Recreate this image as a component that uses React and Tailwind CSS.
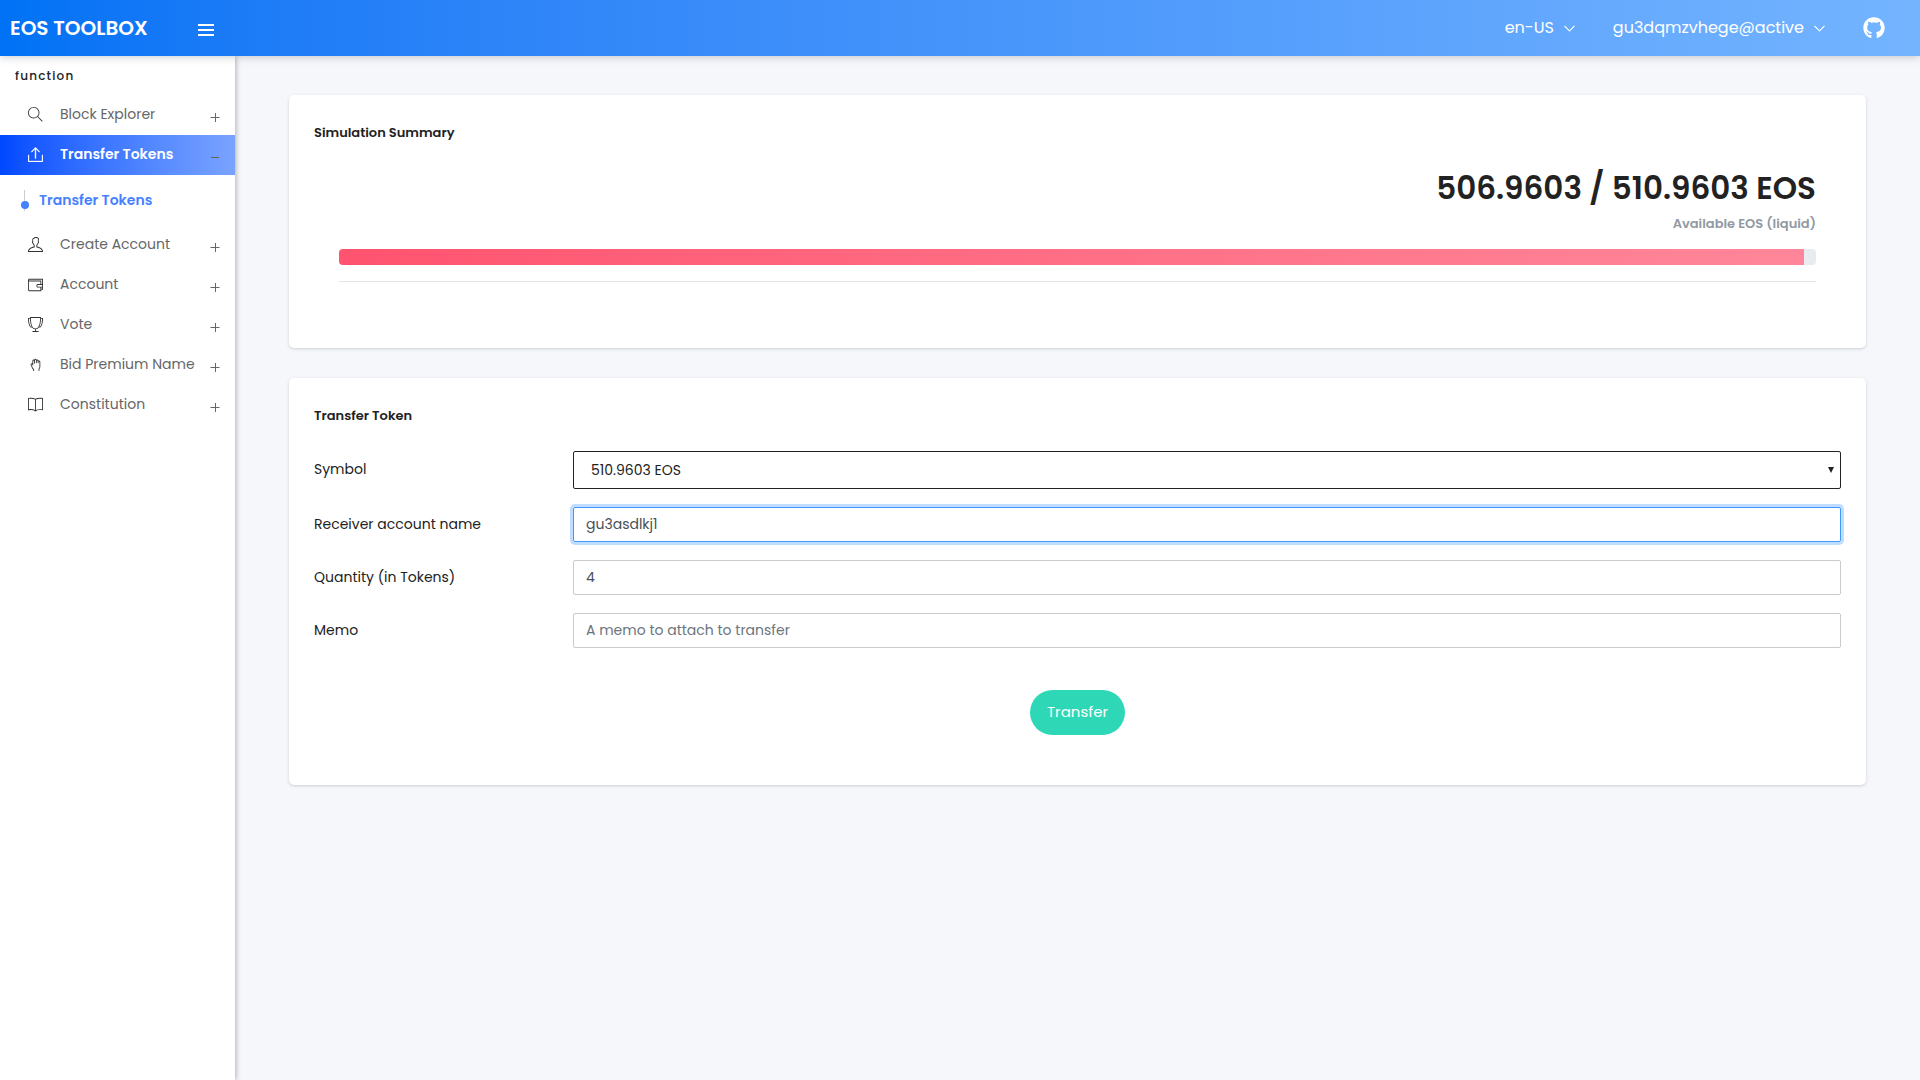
import { useState } from "react";
import { TfiAngleDown, TfiExport, TfiSearch, TfiUser, TfiWallet, TfiCup, TfiHandDrag, TfiBook } from "react-icons/tfi";
import { FaGithub } from "react-icons/fa";

const menu = [
    { title: "Block Explorer", icon: TfiSearch },
    { title: "Transfer Tokens", icon: TfiExport, active: true, children: ["Transfer Tokens"] },
    { title: "Create Account", icon: TfiUser },
    { title: "Account", icon: TfiWallet },
    { title: "Vote", icon: TfiCup },
    { title: "Bid Premium Name", icon: TfiHandDrag },
    { title: "Constitution", icon: TfiBook },
];

function Header() {
    return (
        <header className="relative z-20 flex h-14 items-center justify-between bg-linear-to-r from-[#0072f5] to-[#74b4ff] text-white shadow-[0_1px_8px_rgba(69,90,100,0.3)]">
            <div className="flex w-[235px] items-center justify-between pr-[21px] pl-[10px]">
                <a href="#" className="text-xl font-semibold">EOS TOOLBOX</a>
                <button type="button" aria-label="Toggle menu" className="pt-1">
                    <svg viewBox="0 0 16 14" className="h-3.5 w-4" fill="currentColor">
                        <path d="M0 1h16v2H0zM0 6h16v2H0zM0 11h16v2H0z" />
                    </svg>
                </button>
            </div>
            <nav className="flex items-center gap-[38px] pr-[35px] text-base">
                <button type="button" className="flex items-center gap-[10px]">
                    en-US
                    <TfiAngleDown className="size-[11px] stroke-1" />
                </button>
                <button type="button" className="flex items-center gap-[10px]">
                    gu3dqmzvhege@active
                    <TfiAngleDown className="size-[11px] stroke-1" />
                </button>
                <a href="#" aria-label="GitHub">
                    <FaGithub className="size-[22px]" />
                </a>
            </nav>
        </header>
    );
}

function Sidebar() {
    return (
        <aside className="z-10 w-[235px] shrink-0 bg-white shadow-[1px_0_5px_rgba(43,43,43,0.35)]">
            <div className="flex h-[39px] items-center pl-[15px] text-xs font-medium tracking-widest text-[#222]">function</div>
            <ul>
                {menu.map(({ title, icon: Icon, active, children }) => (
                    <li key={title}>
                        <a
                            href="#"
                            className={
                                active
                                    ? "flex h-10 items-center bg-linear-to-r from-[#0048ff] to-[#7aa3ff] pr-[15px] pb-0.5 pl-[28px] text-sm font-semibold text-white"
                                    : "flex h-10 items-center pr-[15px] pb-0.5 pl-[28px] text-sm text-[#666]"
                            }
                        >
                            <Icon className={active ? "mr-[17px] size-[15px] stroke-[0.5] text-white" : "mr-[17px] size-[15px] text-[#333]"} />
                            <span className="flex-1">{title}</span>
                            <svg viewBox="0 0 10 10" className="mt-1.5 size-[10px]" stroke="#666" fill="none">
                                <path d={active ? "M1 5.500h8" : "M0.500 5.500h9M5.500 1v9"} />
                            </svg>
                        </a>
                        {children && (
                            <ul className="flex h-[50px] items-center">
                                {children.map((child) => (
                                    <li key={child} className="flex items-center pl-[20px]">
                                        <svg viewBox="0 0 10 22" className="mr-[9px] h-[22px] w-[10px]">
                                            <path d="M4.500 1v21" stroke="#ccc" />
                                            <circle cx="5" cy="16" r="4" fill="#4680ff" />
                                        </svg>
                                        <a href="#" className="text-sm font-semibold text-[#4680ff]">{child}</a>
                                    </li>
                                ))}
                            </ul>
                        )}
                    </li>
                ))}
            </ul>
        </aside>
    );
}

function Card({ title, children }) {
    return (
        <section className="rounded-[5px] bg-white px-[25px] pt-[28px] pb-[50px] shadow-[0_1px_3px_rgba(69,90,100,0.25)]">
            <h5 className="text-[13px] leading-5 font-semibold text-[#222]">{title}</h5>
            {children}
        </section>
    );
}

function Summary({ left, total }) {
    return (
        <Card title="Simulation Summary">
            <div className="px-[25px] pt-[22px]">
                <h2 className="text-right text-[31px] leading-[46px] font-semibold text-[#222]">
                    {left} / {total} EOS
                </h2>
                <p className="pt-[3px] text-right text-[13px] leading-5 font-semibold text-[#919aa3]">Available EOS (liquid)</p>
                <div className="mt-[15px] h-4 overflow-hidden rounded bg-[#e9ecef]">
                    <div
                        className="h-full bg-linear-to-r from-[#ff5370] to-[#ff869a]"
                        style={{ width: `${(left / total) * 100}%` }}
                    />
                </div>
                <hr className="mt-4 mb-4 border-[#e2e3e5]" />
            </div>
        </Card>
    );
}

function Field({ id, label, children }) {
    return (
        <div className="grid grid-cols-[259px_1fr] items-center text-sm">
            <label htmlFor={id} className="pb-0.5 text-[#222]">{label}</label>
            {children}
        </div>
    );
}

const inputClass =
    "h-[35px] w-full rounded-xs border border-[#ccc] px-3 text-[#495057] outline-none placeholder:text-[#6c757d] focus:border-[#4099ff] focus:ring-3 focus:ring-[#bfdeff]";

function TransferForm() {
    const [form, setForm] = useState({ symbol: "EOS", receiver: "gu3asdlkj1", quantity: "4", memo: "" });

    const handleChange = (e) => {
        setForm({ ...form, [e.target.name]: e.target.value });
    };

    return (
        <Card title="Transfer Token">
            <form className="flex flex-col gap-[18px] pt-[25px]" onSubmit={(e) => e.preventDefault()}>
                <Field id="symbol" label="Symbol">
                    <div className="relative">
                        <select
                            id="symbol"
                            name="symbol"
                            value={form.symbol}
                            onChange={handleChange}
                            className="block h-[38px] w-full appearance-none rounded-xs border border-[#222] bg-white px-[17px] text-[#222]"
                        >
                            <option value="EOS">510.9603 EOS</option>
                        </select>
                        <svg viewBox="0 0 6 6" className="pointer-events-none absolute top-4 right-[7px] size-1.5" fill="#222">
                            <path d="M0 0h6L3 6z" />
                        </svg>
                    </div>
                </Field>
                <Field id="receiver" label="Receiver account name">
                    <input id="receiver" name="receiver" autoFocus value={form.receiver} onChange={handleChange} className={inputClass} />
                </Field>
                <Field id="quantity" label="Quantity (in Tokens)">
                    <input id="quantity" name="quantity" value={form.quantity} onChange={handleChange} className={inputClass} />
                </Field>
                <Field id="memo" label="Memo">
                    <input
                        id="memo"
                        name="memo"
                        placeholder="A memo to attach to transfer"
                        value={form.memo}
                        onChange={handleChange}
                        className={inputClass}
                    />
                </Field>
                <button type="submit" className="mt-6 h-[45px] self-center rounded-full bg-[#2ed8b6] px-[17px] text-[15px] text-white">
                    Transfer
                </button>
            </form>
        </Card>
    );
}

export default function App() {
    return (
        <div className="flex min-h-screen flex-col bg-[#f6f7fb] font-[Poppins,Inter,sans-serif]">
            <Header />
            <div className="flex flex-1">
                <Sidebar />
                <main className="flex flex-1 flex-col gap-[30px] px-[54px] pt-[39px]">
                    <Summary left="506.9603" total="510.9603" />
                    <TransferForm />
                </main>
            </div>
        </div>
    );
}
